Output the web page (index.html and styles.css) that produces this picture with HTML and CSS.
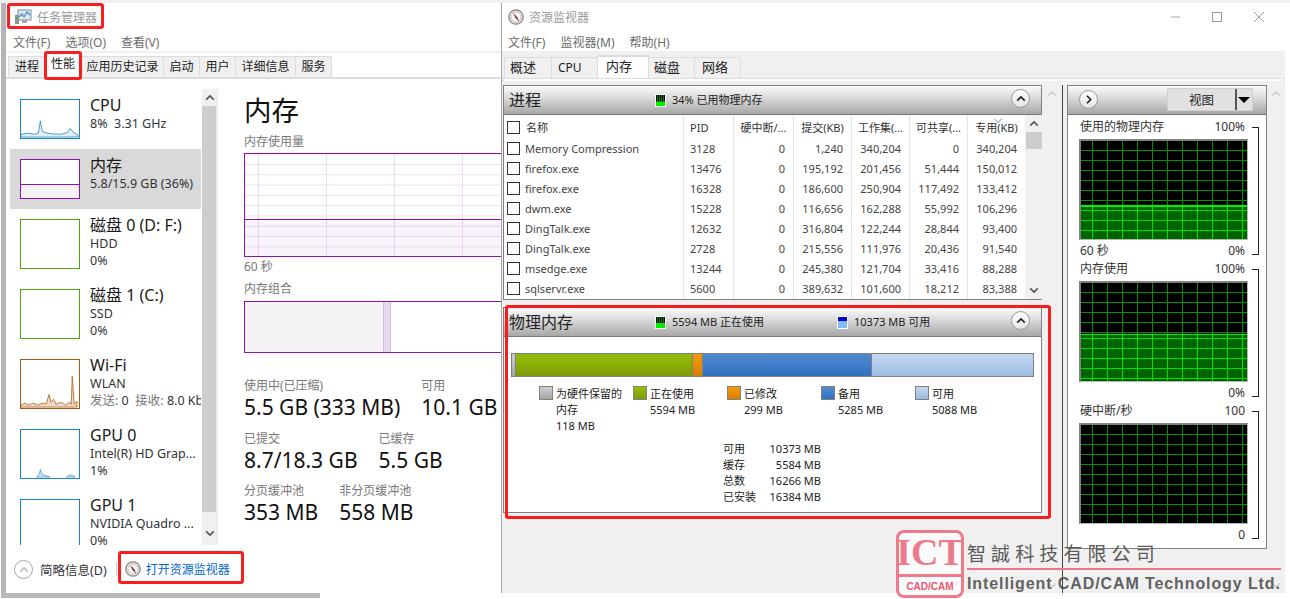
FILE: index.html
```html
<!DOCTYPE html>
<html lang="zh-CN">
<head>
<meta charset="utf-8">
<title>任务管理器与资源监视器</title>
<link rel="stylesheet" href="styles.css">
</head>
<body>
<svg class="defs" width="0" height="0">
  <symbol id="compass" viewBox="0 0 16 16">
    <circle cx="8" cy="8" r="7.2" fill="#e8e4df" stroke="#8a8580" stroke-width="1.2"/>
    <circle cx="8" cy="8" r="5" fill="#fff" stroke="#b8b3ad" stroke-width=".8"/>
    <path d="M5 3.6 L9.2 8 L11 12.4 L6.8 8 Z" fill="#c8282c"/>
    <path d="M6.8 8 L11 12.4 L9.2 8 Z" fill="#55504c"/>
  </symbol>
  <symbol id="chev-up" viewBox="0 0 12 8"><path d="M1.5 6.5 L6 2 L10.500 6.500" fill="none" stroke="currentColor" stroke-width="2"/></symbol>
  <symbol id="chev-down" viewBox="0 0 12 8"><path d="M1.5 1.500 L6 6 L10.500 1.500" fill="none" stroke="currentColor" stroke-width="2"/></symbol>
</svg>

<section class="win win-tm">
  <header class="titlebar">
    <svg class="tm-icon" viewBox="0 0 18 16"><rect x="4" y="1" width="13" height="10" fill="#dfe7ee" stroke="#7d8b96"/><path d="M5 8 L8 5 L10 8 L13 3 L16 6" fill="none" stroke="#3a87c8" stroke-width="1.200"/><rect x="8" y="11" width="5" height="3" fill="#9aa5ae"/><rect x="1" y="6" width="4" height="9" fill="#8c9399"/><rect x="2" y="8" width="2" height="2" fill="#5fb04a"/></svg>
    <span class="title-text">任务管理器</span>
  </header>
  <nav class="menu"><span>文件(F)</span><span>选项(O)</span><span>查看(V)</span></nav>
  <div class="tabs tm-tabs">
    <span class="tab">进程</span><span class="tab active">性能</span><span class="tab">应用历史记录</span><span class="tab">启动</span><span class="tab">用户</span><span class="tab">详细信息</span><span class="tab">服务</span>
  </div>
  <div class="tm-body">
    <aside class="side">
      <div class="side-list">
        <div class="item short">
          <svg class="thumb blue" viewBox="0 0 60 40" preserveAspectRatio="none"><path d="M0 36 L8 35 L14 36 L18 35 L20 22 L22 33 L28 35 L36 36 L42 36 L48 34 L51 30 L54 34 L59 37 V39 H0 Z" fill="#e3eff8" stroke="#1a85c4" stroke-width=".8"/></svg>
          <div class="info"><div class="name">CPU</div><div class="sub">8%&nbsp; 3.31 GHz</div></div>
        </div>
        <div class="item short selected">
          <div class="thumb purple mem-thumb"><div class="mem-fill"></div></div>
          <div class="info"><div class="name">内存</div><div class="sub">5.8/15.9 GB (36%)</div></div>
        </div>
        <div class="item">
          <div class="thumb green"></div>
          <div class="info"><div class="name">磁盘 0 (D: F:)</div><div class="sub">HDD</div><div class="sub">0%</div></div>
        </div>
        <div class="item">
          <div class="thumb green"></div>
          <div class="info"><div class="name">磁盘 1 (C:)</div><div class="sub">SSD</div><div class="sub">0%</div></div>
        </div>
        <div class="item">
          <svg class="thumb brown" viewBox="0 0 60 50" preserveAspectRatio="none"><path d="M0 47 L4 45 L8 47 L12 45 L18 47 L22 45 L26 46 L29 36 L31 44 L34 41 L36 46 L42 44 L46 47 L50 44 L52 46 L53 17 L55 46 L58 43 V49 H0 Z" fill="#f0dcc8" stroke="#a75a14" stroke-width=".8"/></svg>
          <div class="info"><div class="name">Wi-Fi</div><div class="sub">WLAN</div><div class="sub nowrap"><span class="muted">发送:</span> 0&nbsp; <span class="muted">接收:</span> 8.0 Kbps</div></div>
        </div>
        <div class="item">
          <svg class="thumb blue" viewBox="0 0 60 50" preserveAspectRatio="none"><path d="M16 49 L19 46 L20 41 L21.500 46 L24 47 L30 49 Z M47 49 L50 47 L53 47 L56 49 Z" fill="#cfe3f2" stroke="#1a85c4" stroke-width=".6"/></svg>
          <div class="info"><div class="name">GPU 0</div><div class="sub">Intel(R) HD Grap...</div><div class="sub">1%</div></div>
        </div>
        <div class="item">
          <div class="thumb plain-blue"></div>
          <div class="info"><div class="name">GPU 1</div><div class="sub">NVIDIA Quadro ...</div><div class="sub">0%</div></div>
        </div>
      </div>
      <div class="side-scroll">
        <svg class="arrow"><use href="#chev-up"/></svg>
        <div class="side-thumb"></div>
        <svg class="arrow"><use href="#chev-down"/></svg>
      </div>
    </aside>
    <main class="detail">
      <h1>内存</h1>
      <div class="cap">内存使用量</div>
      <div class="usage"><div class="usage-fill"></div></div>
      <div class="cap cap-time">60 秒</div>
      <div class="cap cap-comp">内存组合</div>
      <div class="comp"><div class="comp-used"></div><div class="comp-mod"></div></div>
      <div class="stats">
        <div><div class="cap">使用中(已压缩)</div><div class="val">5.5 GB (333 MB)</div></div>
        <div><div class="cap">可用</div><div class="val">10.1 GB</div></div>
      </div>
      <div class="stats">
        <div><div class="cap">已提交</div><div class="val">8.7/18.3 GB</div></div>
        <div><div class="cap">已缓存</div><div class="val">5.5 GB</div></div>
      </div>
      <div class="stats">
        <div><div class="cap">分页缓冲池</div><div class="val">353 MB</div></div>
        <div><div class="cap">非分页缓冲池</div><div class="val">558 MB</div></div>
      </div>
    </main>
  </div>
  <footer class="tm-foot">
    <span class="circle-btn"><svg class="arrow"><use href="#chev-up"/></svg></span>
    <span class="less">简略信息(D)</span>
    <span class="vsep"></span>
    <svg class="compass"><use href="#compass"/></svg>
    <span class="link">打开资源监视器</span>
  </footer>
</section>

<section class="win win-rm">
  <header class="titlebar rm-title">
    <svg class="compass"><use href="#compass"/></svg>
    <span class="title-text">资源监视器</span>
    <span class="controls">
      <svg viewBox="0 0 12 12"><path d="M1 6 H11" stroke="#999"/></svg>
      <svg viewBox="0 0 12 12"><rect x="1.500" y="1.500" width="9" height="9" fill="none" stroke="#999"/></svg>
      <svg viewBox="0 0 12 12"><path d="M1 1 L11 11 M11 1 L1 11" stroke="#999"/></svg>
    </span>
  </header>
  <nav class="menu rm-menu"><span>文件(F)</span><span>监视器(M)</span><span>帮助(H)</span></nav>
  <div class="rm-grey">
    <div class="tabs rm-tabs">
      <span class="tab">概述</span><span class="tab t-cpu">CPU</span><span class="tab active">内存</span><span class="tab t-disk">磁盘</span><span class="tab">网络</span>
    </div>
    <div class="tabline"></div>
    <div class="rm-body">
      <div class="rm-left">
        <section class="panel">
          <header class="phead">
            <span class="ptitle">进程</span>
            <span class="pmeter m1"><i class="meter green-m"></i>34% 已用物理内存</span>
            <span class="circle-btn small"><svg class="arrow"><use href="#chev-up"/></svg></span>
          </header>
          <div class="table-wrap">
            <div class="table">
              <div class="th first"><i class="cb"></i>名称</div><div class="th pid">PID</div><div class="th">硬中断/...</div><div class="th">提交(KB)</div><div class="th">工作集(...</div><div class="th">可共享(...</div><div class="th sorted">专用(KB)</div>

              <div class="td first"><i class="cb"></i>Memory Compression</div><div class="td pid">3128</div><div class="td">0</div><div class="td">1,240</div><div class="td">340,204</div><div class="td">0</div><div class="td">340,204</div>
              <div class="td first"><i class="cb"></i>firefox.exe</div><div class="td pid">13476</div><div class="td">0</div><div class="td">195,192</div><div class="td">201,456</div><div class="td">51,444</div><div class="td">150,012</div>
              <div class="td first"><i class="cb"></i>firefox.exe</div><div class="td pid">16328</div><div class="td">0</div><div class="td">186,600</div><div class="td">250,904</div><div class="td">117,492</div><div class="td">133,412</div>
              <div class="td first"><i class="cb"></i>dwm.exe</div><div class="td pid">15228</div><div class="td">0</div><div class="td">116,656</div><div class="td">162,288</div><div class="td">55,992</div><div class="td">106,296</div>
              <div class="td first"><i class="cb"></i>DingTalk.exe</div><div class="td pid">12632</div><div class="td">0</div><div class="td">316,804</div><div class="td">122,244</div><div class="td">28,844</div><div class="td">93,400</div>
              <div class="td first"><i class="cb"></i>DingTalk.exe</div><div class="td pid">2728</div><div class="td">0</div><div class="td">215,556</div><div class="td">111,976</div><div class="td">20,436</div><div class="td">91,540</div>
              <div class="td first"><i class="cb"></i>msedge.exe</div><div class="td pid">13244</div><div class="td">0</div><div class="td">245,380</div><div class="td">121,704</div><div class="td">33,416</div><div class="td">88,288</div>
              <div class="td first"><i class="cb"></i>sqlservr.exe</div><div class="td pid">5600</div><div class="td">0</div><div class="td">389,632</div><div class="td">101,600</div><div class="td">18,212</div><div class="td">83,388</div>
            </div>
            <div class="t-scroll">
              <svg class="arrow"><use href="#chev-up"/></svg>
              <div class="t-thumb"></div>
              <svg class="arrow"><use href="#chev-down"/></svg>
            </div>
          </div>
        </section>
        <section class="panel phys">
          <header class="phead">
            <span class="ptitle">物理内存</span>
            <span class="pmeter m1"><i class="meter green-m fill-high"></i>5594 MB 正在使用</span>
            <span class="pmeter m2"><i class="meter blue-m"></i>10373 MB 可用</span>
            <span class="circle-btn small"><svg class="arrow"><use href="#chev-up"/></svg></span>
          </header>
          <div class="phys-body">
            <div class="membar"><i class="seg s-hw"></i><i class="seg s-use"></i><i class="seg s-mod"></i><i class="seg s-stby"></i><i class="seg s-free"></i></div>
            <div class="legend">
              <div class="lg"><i class="sw s-hw"></i><div>为硬件保留的<br>内存<br>118 MB</div></div>
              <div class="lg"><i class="sw s-use"></i><div>正在使用<br>5594 MB</div></div>
              <div class="lg"><i class="sw s-mod"></i><div>已修改<br>299 MB</div></div>
              <div class="lg"><i class="sw s-stby"></i><div>备用<br>5285 MB</div></div>
              <div class="lg"><i class="sw s-free"></i><div>可用<br>5088 MB</div></div>
            </div>
            <div class="totals">
              <span>可用</span><span>10373 MB</span>
              <span>缓存</span><span>5584 MB</span>
              <span>总数</span><span>16266 MB</span>
              <span>已安装</span><span>16384 MB</span>
            </div>
          </div>
        </section>
      </div>
      <div class="mid-scroll">
        <svg class="arrow"><use href="#chev-up"/></svg>
        <svg class="arrow"><use href="#chev-down"/></svg>
      </div>
      <div class="rm-right">
        <section class="panel gpanel">
          <header class="phead ghead">
            <span class="circle-btn small right"><svg class="arrow rot"><use href="#chev-up"/></svg></span>
            <span class="viewbtn"><span class="viewlabel">视图</span><span class="viewdrop"></span></span>
          </header>
          <div class="gbody">
            <div class="gblock">
              <div class="glabels"><span>使用的物理内存</span><span>100%</span></div>
              <div class="chart"><div class="cfill f34"></div></div>
              <div class="glabels low"><span>60 秒</span><span>0%</span></div>
            </div>
            <div class="gblock">
              <div class="glabels"><span>内存使用</span><span>100%</span></div>
              <div class="chart"><div class="cfill f47"></div></div>
              <div class="glabels low"><span></span><span>0%</span></div>
            </div>
            <div class="gblock">
              <div class="glabels"><span>硬中断/秒</span><span>100</span></div>
              <div class="chart"></div>
              <div class="glabels low"><span></span><span>0</span></div>
            </div>
          </div>
        </section>
        <div class="r-scroll">
          <svg class="arrow"><use href="#chev-up"/></svg>
          <svg class="arrow"><use href="#chev-down"/></svg>
        </div>
      </div>
    </div>
  </div>
</section>

<div class="mark box-title"></div>
<div class="mark box-perf"></div>
<div class="mark box-link"></div>
<div class="mark box-phys"></div>

<div class="wm">
  <div class="wm-logo"><div class="wm-ict">ICT</div><div class="wm-cad">CAD/CAM</div></div>
  <div class="wm-text">
    <div class="wm-cn">智誠科技有限公司</div>
    <div class="wm-en">Intelligent CAD/CAM Technology Ltd.</div>
  </div>
</div>
</body>
</html>
```
FILE: styles.css
```css
* { box-sizing: border-box; }
html, body { margin: 0; height: 100%; }
body {
  position: relative;
  width: 1290px;
  height: 599px;
  overflow: hidden;
  background: #fff;
  font-family: "Noto Sans", "Noto Sans CJK SC", sans-serif;
  font-size: 11px;
  color: #222;
}
body::before { content: ""; position: absolute; left: 0; top: 0; width: 1290px; height: 3px; background: #f0f0f0; }
.defs { position: absolute; }
i { font-style: normal; display: block; }

.win { position: absolute; top: 3px; display: flex; flex-direction: column; background: #fff; overflow: hidden; }
.win-tm { left: 6px; width: 496px; height: 590px; box-shadow: -5px 0 0 #b4b4b4; }
.win-rm { left: 501px; width: 784px; height: 590px; border-left: 1px solid #a8a8a8; }
body::after { content: ""; position: absolute; left: 1px; top: 593px; width: 319px; height: 5px; background: #b9b9b9; }

.titlebar { height: 30px; display: flex; align-items: center; padding: 0 0 3px 8px; flex: none; }
.tm-icon { width: 18px; height: 16px; margin-right: 5px; }
.title-text { font-size: 12px; color: #9a9a9a; }
.rm-title { padding-left: 6px; }
.rm-title .title-text { margin-left: 5px; }
.compass { width: 16px; height: 16px; flex: none; }
.controls { margin-left: auto; display: flex; gap: 30px; padding-right: 20px; }
.controls svg { width: 12px; height: 12px; }
.controls svg:nth-child(1) { width: 11px; }

.menu { height: 18px; display: flex; gap: 15px; align-items: center; padding-left: 7px; font-size: 12px; color: #6b6b6b; flex: none; }
.rm-menu { padding-left: 6px; }

.tabs { display: flex; flex: none; font-size: 12px; }
.tm-tabs { border-top: 2px solid #f0f0f0; padding: 3px 0 0 2px; height: 28px; border-bottom: 2px solid #dcdcdc; align-items: stretch; }
.tab { border: 1px solid #dcdcdc; border-bottom: 0; border-left-width: 0; background: #f0f0f0; padding: 0 5.500px; line-height: 20px; white-space: nowrap; }
.tab:first-child { border-left-width: 1px; }
.tab.active { background: #fff; }
.tm-tabs .tab:nth-child(1) { padding: 0 5px 0 6px; }
.tm-tabs .tab:nth-child(2) { margin-top: -3px; padding: 0 6px; border-left-width: 0; }
.tm-tabs .tab:nth-child(3) { padding: 0 4.500px; }

.tm-body { flex: 1; display: flex; min-height: 0; }
.side { width: 212px; flex: none; display: flex; padding: 10px 0 0 4px; }
.side-list { width: 191px; flex: none; overflow: hidden; }
.item { height: 70px; padding: 10px 0 0 10px; display: flex; }
.item.short { height: 60px; }
.item.selected { background: #d9d9d9; }
.thumb { display: block; width: 60px; height: 50px; flex: none; border: 1px solid; background: #fff; }
.short .thumb { height: 40px; }
.blue, .plain-blue { border-color: #1a85c4; }
.purple { border-color: #8b12ae; }
.green { border-color: #4da60c; }
.brown { border-color: #a75a14; }
.mem-thumb { display: flex; flex-direction: column; justify-content: flex-end; }
.mem-fill { height: 14px; background: #f4f2f4; border-top: 1px solid #8b12ae; }
.info { margin-left: 10px; min-width: 0; white-space: nowrap; overflow: hidden; margin-top: -4px; flex: 1; }
.name { font-size: 16px; line-height: 20px; color: #1a1a1a; }
.sub { font-size: 12.500px; line-height: 17px; color: #333; }
.muted { color: #777; }

.side-scroll { width: 17px; margin-left: 1px; background: #f0f0f0; display: flex; flex-direction: column; align-items: center; padding-top: 5px; border-right: 1px solid #e6e6e6; }
.arrow { width: 10px; height: 7px; color: #555; flex: none; }
.side-thumb { align-self: stretch; flex: 1; background: #cdcdcd; margin: 5px 1px 18px 0; }
.side-scroll .arrow:last-child { margin-bottom: 8px; }

.detail { flex: 1; padding: 13px 0 0 26px; min-width: 0; overflow: hidden; }
h1 { margin: 0; font-size: 27.500px; font-weight: 400; line-height: 38px; color: #111; }
.cap { font-size: 12px; line-height: 17px; color: #777; white-space: nowrap; }
.detail > .cap:nth-child(2) { margin-top: 3px; }
.usage {
  margin-top: 3px; width: 300px; height: 104px; border: 1px solid #8b12ae; display: flex; flex-direction: column; justify-content: flex-end;
  background-image:
    linear-gradient(90deg, #eedcf3 1px, transparent 1px),
    linear-gradient(#eedcf3 1px, transparent 1px);
  background-size: 68px 100%, 100% 10.300px;
  background-position: 13px 0, 0 10px;
}
.usage-fill { height: 37px; border-top: 1px solid #8b12ae; background: rgba(139, 18, 174, .05); }
.cap-time { margin-top: 1px; }
.cap-comp { margin-top: 5px; }
.comp { margin-top: 4px; width: 300px; height: 52px; border: 1px solid #8b12ae; display: flex; }
.comp-used { width: 138px; background: #f4f2f4; }
.comp-mod { width: 8px; background: #e8d9ee; border: solid #d5bde0; border-width: 0 1px; }
.stats { display: flex; gap: 21px; }
.comp + .stats { margin-top: 24px; }
.stats + .stats { margin-top: 9px; }
.stats + .stats + .stats { margin-top: 8px; }
.val { font-size: 21px; line-height: 27px; color: #111; white-space: nowrap; }

.tm-foot { height: 48px; display: flex; align-items: center; padding-left: 8px; flex: none; font-size: 12px; }
.circle-btn { width: 19px; height: 19px; border-radius: 50%; border: 1px solid #a6a6a6; display: flex; align-items: center; justify-content: center; background: #fff; flex: none; }
.tm-foot .circle-btn .arrow { color: #bcbcbc; }
.less { margin-left: 7px; color: #333; font-size: 12.500px; }
.vsep { width: 1px; height: 14px; background: #d0d0d0; margin: 0 8px 0 9px; }
.link { margin-left: 5px; color: #0066cc; }

.rm-grey { flex: 1; background: #f0f0f0; min-height: 0; display: flex; flex-direction: column; padding-top: 4px; }
.rm-tabs { padding-left: 2px; height: 23px; font-size: 13px; align-items: flex-end; }
.rm-tabs .tab { height: 21px; width: 46px; text-align: left; padding: 0 0 0 7px; line-height: 19px; }
.rm-tabs .tab:first-child { width: 48px; padding-left: 5px; }
.rm-tabs .t-cpu { font-size: 12px; padding-left: 6px; }
.rm-tabs .t-disk { padding-left: 5px; }
.rm-tabs .tab.active { height: 24px; width: 51px; margin-bottom: -1px; border-left-width: 0; border-top-width: 2px; padding-left: 8px; }
.tabline { height: 3px; margin: 0 1px 0 1px; background: #fff; border: 1px solid #dcdcdc; border-bottom: 0; flex: none; }
.rm-body { flex: 1; display: flex; padding-top: 4px; min-height: 0; }
.rm-left { width: 540px; flex: none; padding-left: 1px; display: flex; flex-direction: column; gap: 7px; }
.panel { border: 1px solid #808080; background: #fff; flex: none; }
.rm-left .panel { height: 215px; }
.rm-left .panel.phys { height: 206px; display: flex; flex-direction: column; }

.phead { height: 29px; display: flex; align-items: center; padding: 0 0 3px 5px; position: relative; border-bottom: 1px solid #777; background: linear-gradient(#fbfbfb, #dcdcdc 40%, #a7a7a7); }
.ptitle { font-size: 16px; color: #222; }
.pmeter { position: absolute; top: 7px; left: 151px; font-size: 11px; line-height: 14px; display: flex; align-items: center; gap: 6px; white-space: nowrap; color: #222; }
.pmeter.m2 { left: 333px; }
.meter { width: 11px; height: 13px; border: 1px solid #fff; }
.green-m {
  background-image: repeating-linear-gradient(90deg, #000 0 1px, #0a7a0a 1px 2px), linear-gradient(#00ee00, #00ee00);
  background-repeat: no-repeat;
  background-size: 100% 60%, 100% 100%;
}
.fill-high { background-size: 100% 58%, 100% 100%; }
.blue-m { background: linear-gradient(#0000d8 0 40%, #7fbcff 40%); }
.circle-btn.small { margin-left: auto; margin-right: 11px; width: 19px; height: 19px; background: linear-gradient(#fff, #e4e4e4); border-color: #999; }
.circle-btn.small .arrow { color: #222; }

.table-wrap { display: flex; height: 184px; }
.table { flex: 1; display: grid; grid-template-columns: 179px 50px 60px 58px 58px 58px 58px; grid-auto-rows: 20px; grid-template-rows: 24px; align-content: start; }
.th, .td { border-left: 1px solid #e4e4e4; display: flex; align-items: center; justify-content: flex-end; padding: 0 8px 1px 0; white-space: nowrap; color: #444; font-size: 11px; }
.th { justify-content: center; padding: 0; color: #333; }
.th.sorted { position: relative; }
.th.sorted::before { content: ""; position: absolute; top: 1px; left: 27px; width: 5px; height: 5px; border: solid #aaa; border-width: 0 1px 1px 0; transform: rotate(45deg); }
.first { border-left: 0; justify-content: flex-start !important; padding: 0 0 1px 3px; }
.th.first { color: #333; padding: 0 0 0 3px; }
.pid { justify-content: flex-start; padding: 0 0 1px 6px; }
.th.pid { justify-content: flex-start; padding-bottom: 0; }
.cb { width: 13px; height: 13px; border: 1px solid #333; background: #fff; margin-right: 5px; flex: none; }
.th .cb { margin-right: 6px; }
.t-scroll { width: 17px; flex: none; display: flex; flex-direction: column; align-items: center; padding-top: 5px; background: #f0f0f0; border-left: 1px solid #f0f0f0; }
.t-thumb { align-self: stretch; height: 17px; background: #cdcdcd; margin-top: 5px; margin-bottom: auto; }
.t-scroll .arrow:last-child { margin-bottom: 5px; }

.phys-body { flex: 1; padding: 16px 7px 0 7px; position: relative; }
.membar { height: 24px; display: flex; border: 1px solid #808080; }
.seg { display: block; border-right: 1px solid #808080; }
.seg:last-child { border-right: 0; flex: 1; }
.seg.s-hw { width: 4px; }
.seg.s-use { width: 177px; }
.seg.s-mod { width: 10px; }
.seg.s-stby { width: 169px; }
.s-hw { background: linear-gradient(#cfcfcf, #a5a5a5); }
.s-use { background: linear-gradient(#96bd0a, #7e9c06); }
.s-mod { background: linear-gradient(#f79c0a, #d47f00); }
.s-stby { background: linear-gradient(#538ad0, #2f6fbf); }
.s-free { background: linear-gradient(#c3d8ef, #9bbce4); }
.legend { display: flex; padding-left: 28px; margin-top: 9px; }
.lg { width: 94px; display: flex; gap: 3px; font-size: 11px; line-height: 16px; color: #222; }
.sw { width: 14px; height: 14px; border: 1px solid #808080; flex: none; }
.totals { position: absolute; left: 219px; top: 104px; display: grid; grid-template-columns: 45px 53px; line-height: 16px; font-size: 11px; color: #222; }
.totals span:nth-child(even) { text-align: right; white-space: nowrap; }

.mid-scroll { width: 20px; flex: none; display: flex; flex-direction: column; align-items: center; justify-content: space-between; padding: 5px 0 4px; }
.mid-scroll .arrow, .r-scroll .arrow { color: #cfcfcf; }
.rm-right { flex: 1; border-left: 1px solid #444; padding-left: 4px; display: flex; }
.gpanel { width: 200px; height: 464px; display: flex; flex-direction: column; }
.ghead { padding: 0 0 2px; justify-content: space-between; }
.circle-btn.right { margin: 0 0 0 11px; }
.rot { transform: rotate(90deg); }
.viewbtn { display: flex; width: 86px; height: 23px; margin-right: 13px; background: #e1e1e1; border: 1px solid #d0d0d0; align-items: center; font-size: 12.500px; }
.viewlabel { width: 68px; text-align: center; }
.viewdrop { width: 17px; height: 21px; border-left: 2px solid #555; position: relative; }
.viewdrop::after { content: ""; position: absolute; left: 1px; top: 8px; border: 6px solid transparent; border-top: 6px solid #000; border-bottom: 0; }
.gbody { padding: 4px 0 0 11px; flex: 1; }
.gblock { width: 169px; position: relative; height: 142px; }
.gblock::after { content: ""; position: absolute; left: 173px; top: 8px; width: 6px; height: 126px; border: solid #222; border-width: 1px 1px 1px 0; }
.glabels { display: flex; justify-content: space-between; font-size: 12px; line-height: 16px; height: 20px; padding: 0 3px 0 1px; color: #333; white-space: nowrap; }
.glabels.low { padding-top: 3px; height: 21px; }
.chart {
  height: 101px; border: 1px solid #b5b5b5; border-top: 2px solid #808080; border-left: 2px solid #808080; display: flex; flex-direction: column; justify-content: flex-end;
  background-color: #000;
  background-image:
    linear-gradient(90deg, #009000 1px, transparent 1px),
    linear-gradient(#009000 1px, transparent 1px);
  background-size: 15px 100%, 100% 10px;
  background-position: 11px 0, 0 9px;
}
.cfill {
  border-top: 2px solid #00f000;
  background-color: #006400;
  background-image:
    linear-gradient(90deg, #00e000 1px, transparent 1px),
    linear-gradient(#00e000 1px, transparent 1px);
  background-size: 15px 100%, 100% 10px;
  background-position: 11px 0, 0 3px;
}
.f34 { height: 34px; }
.f47 { height: 47px; border-top-width: 1px; }
.r-scroll { flex: 1; display: flex; flex-direction: column; align-items: center; justify-content: space-between; padding: 5px 0 4px; }

.mark { position: absolute; border: 3px solid #fb1d1d; border-radius: 3px; }
.box-title { left: 7px; top: 3px; width: 97px; height: 26px; }
.box-perf { left: 44px; top: 51px; width: 38px; height: 29px; }
.box-link { left: 118px; top: 551px; width: 126px; height: 33px; }
.box-phys { left: 505px; top: 305px; width: 546px; height: 214px; }

.wm { position: absolute; left: 896px; top: 530px; display: flex; width: 394px; }
.wm-logo { width: 68px; height: 68px; flex: none; border: 3px solid #ee7b8c; border-radius: 8px; background: rgba(255,255,255,.75); display: flex; flex-direction: column; align-items: center; overflow: hidden; }
.wm-ict { font-family: "Liberation Serif", serif; font-weight: 700; font-size: 38px; line-height: 38px; color: #ee7b8c; }
.wm-cad { margin-top: 3px; width: 100%; flex: 1; border-top: 3px solid #ee7b8c; font-family: "Liberation Sans", sans-serif; font-weight: 700; font-size: 10px; line-height: 20px; text-align: center; color: #ee5570; }
.wm-text { margin-left: 3px; flex: 1; }
.wm-cn { margin-top: 12px; font-family: "Noto Sans CJK SC", serif; font-size: 19px; line-height: 22px; letter-spacing: 5.100px; color: #5a5a5a; border-bottom: 2px solid #e8798a; padding-bottom: 4px; width: 314px; white-space: nowrap; }
.wm-en { margin-top: 4px; font-family: "Liberation Sans", sans-serif; font-weight: 700; font-size: 16px; line-height: 19px; letter-spacing: .9px; color: rgba(70,70,70,.85); white-space: nowrap; }
```
